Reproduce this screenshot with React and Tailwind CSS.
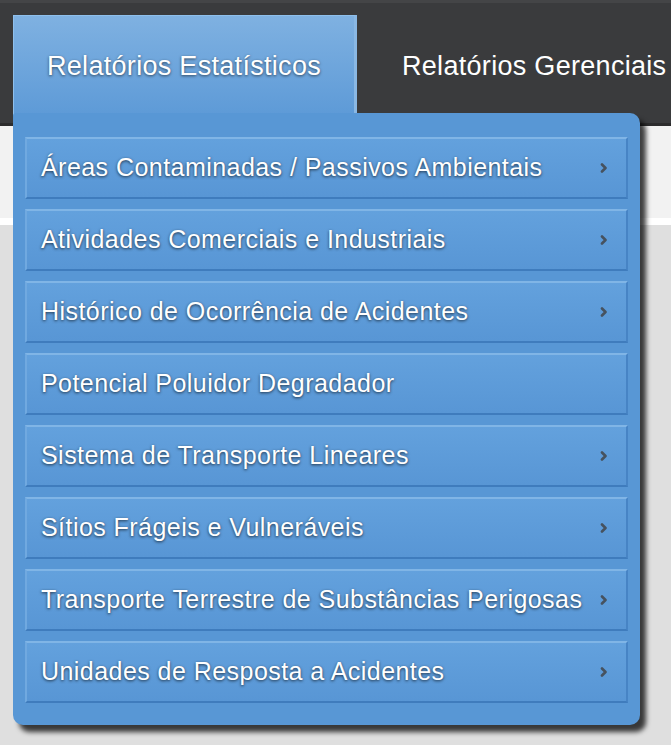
import React from "react";

const items = [
  { label: "Áreas Contaminadas / Passivos Ambientais", arrow: true },
  { label: "Atividades Comerciais e Industriais", arrow: true },
  { label: "Histórico de Ocorrência de Acidentes", arrow: true },
  { label: "Potencial Poluidor Degradador", arrow: false },
  { label: "Sistema de Transporte Lineares", arrow: true },
  { label: "Sítios Frágeis e Vulneráveis", arrow: true },
  { label: "Transporte Terrestre de Substâncias Perigosas", arrow: true },
  { label: "Unidades de Resposta a Acidentes", arrow: true },
];

function Chevron() {
  return (
    <svg width="8" height="10" viewBox="0 0 8 10" className="shrink-0">
      <path d="M2 1.5 L5.5 5 L2 8.5" fill="none" stroke="#46525f" strokeWidth="2.6" strokeLinecap="round" strokeLinejoin="round" />
    </svg>
  );
}

export default function App() {
  return (
    <div
      className="relative w-full h-[745px] overflow-hidden bg-[#dfdfdf]"
      style={{ fontFamily: '"Liberation Sans", Arial, sans-serif' }}
    >
      {/* top bar */}
      <div className="h-[126px] bg-[#3a3b3d] border-t-[3px] border-t-[#444547] border-b-[3px] border-b-[#2c2c2d] flex items-start pt-[12px] pl-[13px]">
        <div className="w-[344px] h-[110px] bg-gradient-to-b from-[#7fb1e1] to-[#5a98d6] border-t border-l border-[#8fc0ec] border-r-[3px] border-r-[#8ab8e4] flex justify-center pt-[30px]">
          <span className="text-white text-[27px] tracking-[0.3px] [text-shadow:0_1px_3px_rgba(0,0,0,0.6)]">
            Relatórios Estatísticos
          </span>
        </div>
        <div className="pl-[45px] pt-[31px]">
          <span className="text-white text-[27px] tracking-[0.3px] whitespace-nowrap">
            Relatórios Gerenciais
          </span>
        </div>
      </div>
      <div className="h-[92px] bg-[#f2f2f2]" />
      <div className="h-[7px] bg-white" />

      {/* dropdown panel */}
      <div className="absolute left-[13px] top-[113px] w-[627px] h-[612px] bg-[#5897d5] rounded-tr-[10px] rounded-b-[10px] rounded-tl-[3px] shadow-[6px_7px_5px_rgba(0,0,0,0.75)] pt-[24px] px-[12px] flex flex-col gap-[10px]">
        {items.map((it) => (
          <div
            key={it.label}
            className="h-[62px] flex items-center justify-between pl-[14px] pr-[18px] bg-gradient-to-b from-[#63a1dd] to-[#5896d5] border-t-2 border-t-[#80b5e6] border-l-2 border-l-[#70a9e0] border-b-2 border-b-[#3f7cbd] border-r-2 border-r-[#4784c5]"
          >
            <span className="text-white text-[25px] tracking-[0.45px] whitespace-nowrap [text-shadow:0_1px_3px_rgba(0,0,0,0.7)]">
              {it.label}
            </span>
            {it.arrow && <Chevron />}
          </div>
        ))}
      </div>
    </div>
  );
}
